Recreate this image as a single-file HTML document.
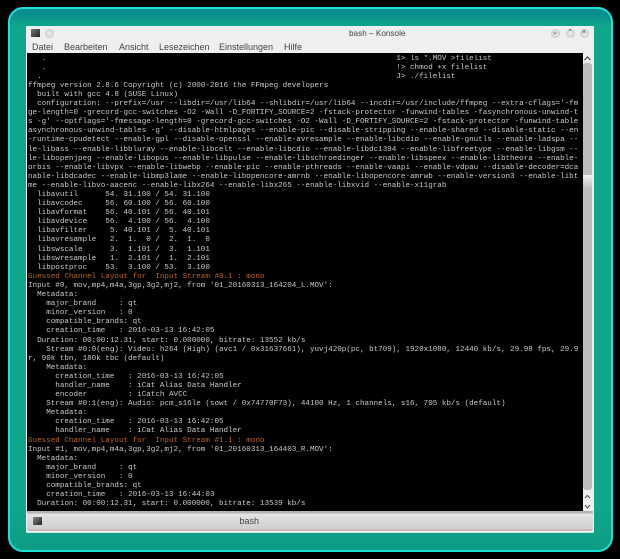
<!DOCTYPE html>
<html><head><meta charset="utf-8"><style>
*{margin:0;padding:0;box-sizing:border-box}
html,body{width:620px;height:559px;background:#000;overflow:hidden}
body{position:relative;font-family:"Liberation Sans",sans-serif}
div{position:absolute}
.frame{left:8px;top:7px;width:605px;height:545px;border:2.5px solid #1fe0d8;border-radius:15px;background:linear-gradient(#0a8c8e 0,#0a8c8e 4px,#0fa68c 18px,#0fa68c 500px,#0c9d84 100%)}
.win{left:26px;top:26px;width:568px;height:506px;background:#efefef;border-radius:1px;box-shadow:0 1px 0 #c8e8e0}
.term{left:27px;top:53px;width:556px;height:458px;background:#000}
pre{position:absolute;left:28px;top:54.6px;font:7.58px/9.09px "Liberation Mono",monospace;color:#cacaca;white-space:pre;filter:blur(.35px)}
.o{color:#b8661c}
.menu{top:42px;font-size:9px;line-height:11px;color:#444;filter:blur(.25px);white-space:pre}
.title{top:28px;left:349px;font-size:8.2px;line-height:11px;color:#444;filter:blur(.25px)}
.btn{top:28.5px;width:9px;height:9px;border-radius:50%;background:radial-gradient(#f0f0f0,#bcbcbc);color:#444;font-size:7px;line-height:8px;text-align:center}
.tabs{left:27px;top:511px;width:566px;height:20px;background:linear-gradient(#b4b4b4 0,#b4b4b4 2px,#e4e4e4 3px,#cfcfcf 100%);border-bottom:2px solid #c9b6b6;border-radius:0 0 3px 3px}
.sb{left:583px;top:63px;width:9px;height:427px;background:#bcbcbc;border-radius:3px}
</style></head><body>
<div class="frame"></div>
<div class="win"></div>
<div style="left:31px;top:29px;width:9px;height:8px;background:linear-gradient(135deg,#777,#222)"></div>
<div class="btn" style="left:44.5px"></div>
<div class="title">bash – Konsole</div>
<div class="btn" style="left:550.5px">⌄</div>
<div class="btn" style="left:565.5px">⌃</div>
<div class="btn" style="left:579.5px">×</div>
<div class="menu" style="left:32px">Datei</div>
<div class="menu" style="left:64px">Bearbeiten</div>
<div class="menu" style="left:119px">Ansicht</div>
<div class="menu" style="left:159px">Lesezeichen</div>
<div class="menu" style="left:219px">Einstellungen</div>
<div class="menu" style="left:284px">Hilfe</div>
<div class="term"></div>
<pre>   .                                                                             1&gt; ls *.MOV &gt;filelist
   .                                                                             !&gt; chmod +x filelist
  .                                                                              J&gt; ./filelist
ffmpeg version 2.8.6 Copyright (c) 2000-2016 the FFmpeg developers
  built with gcc 4.8 (SUSE Linux)
  configuration: --prefix=/usr --libdir=/usr/lib64 --shlibdir=/usr/lib64 --incdir=/usr/include/ffmpeg --extra-cflags='-fm
ge-length=0 -grecord-gcc-switches -O2 -Wall -D_FORTIFY_SOURCE=2 -fstack-protector -funwind-tables -fasynchronous-unwind-t
s -g' --optflags='-fmessage-length=0 -grecord-gcc-switches -O2 -Wall -D_FORTIFY_SOURCE=2 -fstack-protector -funwind-table
asynchronous-unwind-tables -g' --disable-htmlpages --enable-pic --disable-stripping --enable-shared --disable-static --en
-runtime-cpudetect --enable-gpl --disable-openssl --enable-avresample --enable-libcdio --enable-gnutls --enable-ladspa --
le-libass --enable-libbluray --enable-libcelt --enable-libcdio --enable-libdc1394 --enable-libfreetype --enable-libgsm --
le-libopenjpeg --enable-libopus --enable-libpulse --enable-libschroedinger --enable-libspeex --enable-libtheora --enable-
orbis --enable-libvpx --enable-libwebp --enable-pic --enable-pthreads --enable-vaapi --enable-vdpau --disable-decoder=dca
nable-libdcadec --enable-libmp3lame --enable-libopencore-amrnb --enable-libopencore-amrwb --enable-version3 --enable-libt
me --enable-libvo-aacenc --enable-libx264 --enable-libx265 --enable-libxvid --enable-x11grab
  libavutil      54. 31.100 / 54. 31.100
  libavcodec     56. 60.100 / 56. 60.100
  libavformat    56. 40.101 / 56. 40.101
  libavdevice    56.  4.100 / 56.  4.100
  libavfilter     5. 40.101 /  5. 40.101
  libavresample   2.  1.  0 /  2.  1.  0
  libswscale      3.  1.101 /  3.  1.101
  libswresample   1.  2.101 /  1.  2.101
  libpostproc    53.  3.100 / 53.  3.100
<span class="o">Guessed Channel Layout for  Input Stream #0.1 : mono</span>
Input #0, mov,mp4,m4a,3gp,3g2,mj2, from '01_20160313_164204_L.MOV':
  Metadata:
    major_brand     : qt
    minor_version   : 0
    compatible_brands: qt
    creation_time   : 2016-03-13 16:42:05
  Duration: 00:00:12.31, start: 0.000000, bitrate: 13552 kb/s
    Stream #0:0(eng): Video: h264 (High) (avc1 / 0x31637661), yuvj420p(pc, bt709), 1920x1080, 12440 kb/s, 29.98 fps, 29.9
r, 90k tbn, 180k tbc (default)
    Metadata:
      creation_time   : 2016-03-13 16:42:05
      handler_name    : iCat Alias Data Handler
      encoder         : iCatch AVCC
    Stream #0:1(eng): Audio: pcm_s16le (sowt / 0x74770F73), 44100 Hz, 1 channels, s16, 705 kb/s (default)
    Metadata:
      creation_time   : 2016-03-13 16:42:05
      handler_name    : iCat Alias Data Handler
<span class="o">Guessed Channel Layout for  Input Stream #1.1 : mono</span>
Input #1, mov,mp4,m4a,3gp,3g2,mj2, from '01_20160313_164403_R.MOV':
  Metadata:
    major_brand     : qt
    minor_version   : 0
    compatible_brands: qt
    creation_time   : 2016-03-13 16:44:03
  Duration: 00:00:12.31, start: 0.000000, bitrate: 13539 kb/s</pre>
<div class="sb"></div>
<div style="left:583px;top:175px;width:9px;height:14px;background:linear-gradient(#f0f0f0,#bcbcbc)"></div>
<svg style="position:absolute;left:583px;top:54px" width="9" height="8" fill="none" stroke="#444" stroke-width="1.2"><path d="M1.5 6 4.5 3 7.5 6"/></svg>
<svg style="position:absolute;left:583px;top:492px" width="9" height="20" fill="none" stroke="#555" stroke-width="1.1"><path d="M2 6 4.5 3.5 7 6M2 13 4.5 16 7 13"/></svg>
<div class="tabs"></div>
<div style="left:33px;top:517px;width:9px;height:8px;background:linear-gradient(135deg,#888,#222)"></div>
<div style="left:239.5px;top:516px;font-size:9px;line-height:11px;color:#444;filter:blur(.25px)">bash</div>
</body></html>
